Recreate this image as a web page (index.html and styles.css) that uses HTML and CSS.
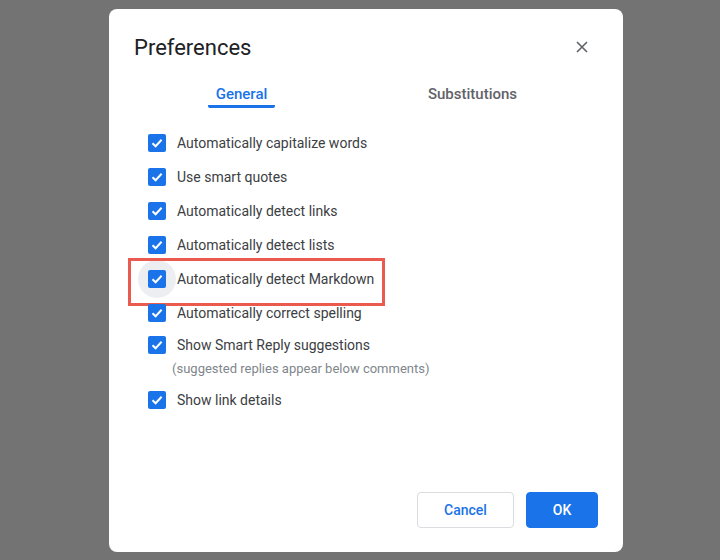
FILE: index.html
```html
<!DOCTYPE html>
<html lang="en">
<head>
  <meta charset="UTF-8" />
  <title>Preferences</title>
  <link rel="stylesheet" href="styles.css">
</head>
<body>

  <div class="dialog">
    <div class="dialog-header">
      <h1 class="title">Preferences</h1>
      <button class="close" aria-label="Close">
        <svg width="14" height="14" viewBox="0 0 14 14"><path d="M2 2 L12 12 M12 2 L2 12" stroke="#5f6368" stroke-width="1.6" fill="none"/></svg>
      </button>
    </div>

    <div class="tabs">
      <div class="tab"><span class="tab-label active">General</span></div>
      <div class="tab"><span class="tab-label">Substitutions</span></div>
    </div>

    <ul class="options">
      <li class="option"><span class="box"></span>Automatically capitalize words</li>
      <li class="option"><span class="box"></span>Use smart quotes</li>
      <li class="option"><span class="box"></span>Automatically detect links</li>
      <li class="option"><span class="box"></span>Automatically detect lists</li>
      <li class="option highlighted"><span class="box focused"></span>Automatically detect Markdown</li>
      <li class="option"><span class="box"></span>Automatically correct spelling</li>
      <li class="option smart"><span class="box"></span>Show Smart Reply suggestions</li>
      <li class="hint">(suggested replies appear below comments)</li>
      <li class="option"><span class="box"></span>Show link details</li>
    </ul>

    <div class="footer">
      <button class="btn btn-cancel">Cancel</button>
      <button class="btn btn-ok">OK</button>
    </div>
  </div>

</body>
</html>
```

FILE: styles.css
```css
* {
  box-sizing: border-box;
}

body {
  margin: 0;
  height: 560px;
  background: #737373;
  font-family: Roboto, "Liberation Sans", sans-serif;
  padding: 9px 0 0 109px;
}

.dialog {
  width: 514px;
  height: 543px;
  background: #fff;
  border-radius: 8px;
  padding: 25px 25px 24px 25px;
  display: flex;
  flex-direction: column;
}

.dialog-header {
  display: flex;
  align-items: center;
  justify-content: space-between;
  height: 28px;
}

.title {
  margin: 0;
  font-size: 22px;
  font-weight: 400;
  color: #202124;
  line-height: 28px;
}

.close {
  border: none;
  background: none;
  padding: 0;
  width: 14px;
  height: 14px;
  margin: -2px 9px 0 0;
  display: flex;
}

/* Tabs */
.tabs {
  display: flex;
  margin: 22px 10px 0 -8px;
}

.tab {
  flex: 1;
  text-align: center;
}

.tab-label {
  display: inline-block;
  font-size: 15px;
  font-weight: 500;
  line-height: 20px;
  color: #5f6368;
  padding: 0 8px 1px;
  border-bottom: 3px solid transparent;
}

.tab-label.active {
  color: #1a73e8;
  border-bottom-color: #1a73e8;
  border-radius: 0 0 2px 2px;
}

/* Options */
.options {
  list-style: none;
  margin: 18px 0 0 14px;
  padding: 0;
}

.option {
  position: relative;
  display: flex;
  align-items: center;
  height: 34px;
  font-size: 14px;
  color: #3c4043;
}

.box {
  position: relative;
  width: 18px;
  height: 18px;
  margin-right: 11px;
  border-radius: 2px;
  background: #1a73e8 url("data:image/svg+xml,%3Csvg xmlns='http://www.w3.org/2000/svg' width='18' height='18'%3E%3Cpath d='M4.5 9.3 L7.6 12.3 L13.6 5.8' stroke='white' stroke-width='2' fill='none'/%3E%3C/svg%3E") no-repeat center;
}

.box.focused::before {
  content: "";
  position: absolute;
  left: -10px;
  top: -10px;
  width: 38px;
  height: 38px;
  border-radius: 50%;
  background: #eceef1;
  z-index: -1;
}

.highlighted {
  z-index: 0;
}

.highlighted::after {
  content: "";
  position: absolute;
  left: -20px;
  top: -4px;
  width: 251px;
  height: 42px;
  border: 3px solid #ea5a4f;
}

.smart {
  margin-top: -2px;
}

.hint {
  font-size: 13px;
  line-height: 16px;
  color: #80868b;
  margin: -1px 0 6px 24px;
}

/* Footer */
.footer {
  margin-top: auto;
  display: flex;
  justify-content: flex-end;
  gap: 12px;
}

.btn {
  height: 36px;
  border-radius: 4px;
  font-family: inherit;
  font-size: 14px;
  font-weight: 500;
}

.btn-cancel {
  width: 97px;
  background: #fff;
  border: 1px solid #dadce0;
  color: #1a73e8;
}

.btn-ok {
  width: 72px;
  background: #1a73e8;
  border: 1px solid #1a73e8;
  color: #fff;
}
```
